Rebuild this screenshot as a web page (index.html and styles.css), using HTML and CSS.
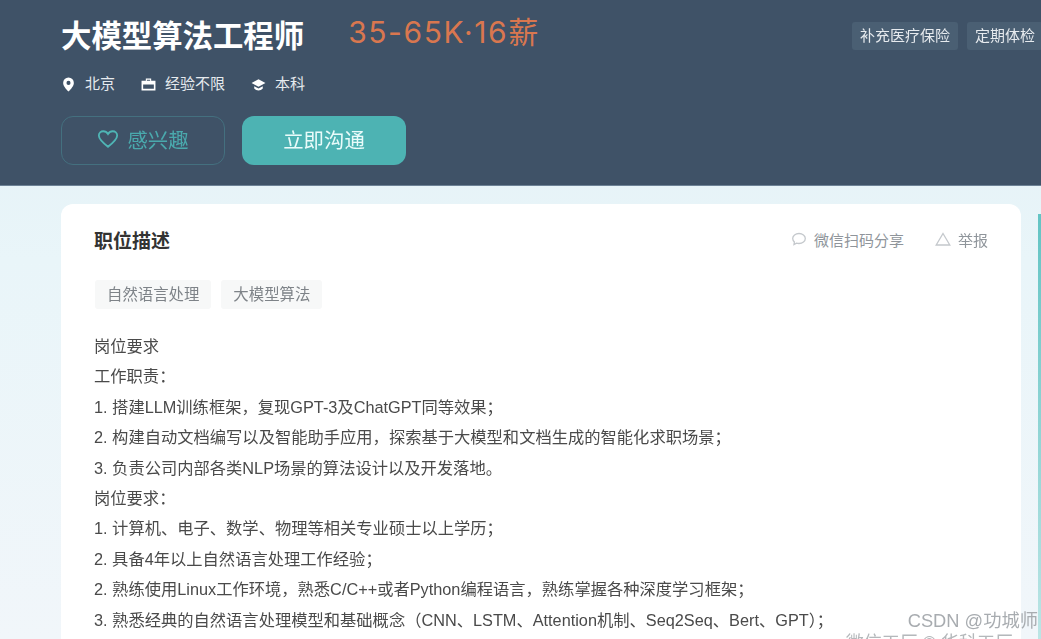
FILE: index.html
```html
<!DOCTYPE html>
<html lang="zh-CN">
<head>
  <meta charset="UTF-8">
  <title>大模型算法工程师</title>
  <link rel="stylesheet" href="styles.css">
</head>
<body>

  <!-- 顶部职位信息 -->
  <header class="job-header">
    <div class="job-main">
      <div class="title-row">
        <h1 class="job-title">大模型算法工程师</h1>
        <span class="job-salary">35-65K·16薪</span>
      </div>
      <ul class="job-meta">
        <li>
          <svg class="meta-icon" viewBox="0 0 14 14"><path fill="#fff" fill-rule="evenodd" d="M7 0.5a5 5 0 0 0-5 5c0 3.4 5 8 5 8s5-4.6 5-8a5 5 0 0 0-5-5zm0 3.1a1.9 1.9 0 1 1 0 3.8 1.9 1.9 0 0 1 0-3.8z"/></svg>
          北京
        </li>
        <li>
          <svg class="meta-icon" viewBox="0 0 14 14"><path fill="#fff" fill-rule="evenodd" d="M4.500 3.500V1.500h5v2h4v9H.5v-9zm1 0h3v-1h-3zM2 7v4h10V7z"/></svg>
          经验不限
        </li>
        <li>
          <svg class="meta-icon" viewBox="0 0 14 14"><path fill="#fff" d="M7 2 .5 5.500 7 9l6.500-3.500zM3 8.600v2.200C4 12 5.500 12.500 7 12.500s3-.5 4-1.700V8.600L7 10.700z"/></svg>
          本科
        </li>
      </ul>
      <div class="job-actions">
        <button class="btn btn-outline">
          <svg class="heart-icon" viewBox="0 0 24 24"><path fill="none" stroke="#4fb5b5" stroke-width="2" d="M12 20.500C5 15 2 11.800 2 8.200 2 5.300 4.300 3.500 6.800 3.500c2.100 0 4 1.100 5.200 3.100 1.200-2 3.100-3.100 5.200-3.100 2.500 0 4.800 1.800 4.800 4.700 0 3.600-3 6.800-10 12.300z"/></svg>
          感兴趣
        </button>
        <button class="btn btn-solid">立即沟通</button>
      </div>
    </div>
    <div class="job-benefits">
      <span>补充医疗保险</span>
      <span>定期体检</span>
    </div>
  </header>

  <div class="page-body">
    <section class="card">
      <div class="card-head">
        <h2>职位描述</h2>
        <div class="card-tools">
          <span class="tool">
            <svg class="tool-icon" viewBox="0 0 16 16"><path fill="none" stroke="#c4c8cc" stroke-width="1.300" d="M8 2.500c3.500 0 6.300 2.200 6.300 5s-2.800 5-6.300 5c-.9 0-1.700-.1-2.500-.4L3 13.500l.4-2.600C2.300 10 1.700 8.800 1.700 7.500c0-2.800 2.800-5 6.300-5z"/></svg>
            微信扫码分享
          </span>
          <span class="tool">
            <svg class="tool-icon" viewBox="0 0 16 16"><path fill="none" stroke="#c4c8cc" stroke-width="1.300" d="M8 2.500 14.800 14H1.200z"/></svg>
            举报
          </span>
        </div>
      </div>
      <div class="skill-tags">
        <span>自然语言处理</span>
        <span>大模型算法</span>
      </div>
      <div class="job-desc">
        <p>岗位要求</p>
        <p>工作职责：</p>
        <p>1. 搭建LLM训练框架，复现GPT-3及ChatGPT同等效果；</p>
        <p>2. 构建自动文档编写以及智能助手应用，探索基于大模型和文档生成的智能化求职场景；</p>
        <p>3. 负责公司内部各类NLP场景的算法设计以及开发落地。</p>
        <p>岗位要求：</p>
        <p>1. 计算机、电子、数学、物理等相关专业硕士以上学历；</p>
        <p>2. 具备4年以上自然语言处理工作经验；</p>
        <p>2. 熟练使用Linux工作环境，熟悉C/C++或者Python编程语言，熟练掌握各种深度学习框架；</p>
        <p>3. 熟悉经典的自然语言处理模型和基础概念（CNN、LSTM、Attention机制、Seq2Seq、Bert、GPT）；</p>
      </div>
    </section>
    <aside class="side-edge"></aside>
  </div>

  <div class="watermark">CSDN @功城师</div>
  <div class="watermark-low">微信工厂 © 华科工厂</div>

</body>
</html>
```

FILE: styles.css
```css
html, body {
  height: 100%;
}

body {
  margin: 0;
  overflow: hidden;
  font-family: "Liberation Sans", "Noto Sans CJK SC", sans-serif;
  background: linear-gradient(180deg, #e2f0f5 0, #e9f5f9 260px, #f1f6fa 100%);
  color: #333;
}

.job-header {
  height: 186px;
  box-sizing: border-box;
  padding: 15px 0 0 61px;
  display: flex;
  justify-content: space-between;
  background-color: #3f5267;
  border-bottom: 1px solid #6d8296;
  filter: blur(0.5px);
}

.title-row {
  display: flex;
  align-items: center;
  gap: 44px;
  height: 42px;
}

.job-title {
  margin: 0;
  font-size: 30.4px;
  line-height: 42px;
  font-weight: bold;
  color: #fff;
}

.job-salary {
  font-family: "Inter", "Noto Sans CJK SC", sans-serif;
  font-size: 30px;
  line-height: 38px;
  letter-spacing: 1.6px;
  margin-top: -8px;
  color: #d9774f;
}

.job-meta {
  list-style: none;
  margin: 17px 0 0;
  padding: 0;
  display: flex;
  gap: 26px;
  font-size: 15px;
  line-height: 20px;
  color: #e6eaee;
}

.job-meta li {
  display: flex;
  align-items: center;
  gap: 9px;
}

.meta-icon {
  width: 15px;
  height: 15px;
}

.job-actions {
  display: flex;
  gap: 17px;
  margin-top: 22px;
}

.btn {
  width: 164px;
  height: 49px;
  box-sizing: border-box;
  padding: 0 0 4px;
  border-radius: 12px;
  font-family: inherit;
  font-size: 20.4px;
  display: flex;
  align-items: center;
  justify-content: center;
}

.btn-outline {
  gap: 8px;
  background: transparent;
  border: 1px solid #44707f;
  color: #4aa9ad;
}

.heart-icon {
  width: 22px;
  height: 22px;
}

.btn-solid {
  border: none;
  background-color: #4db3b3;
  color: #e9fbfa;
}

.job-benefits {
  display: flex;
  flex-shrink: 0;
  gap: 9px;
  margin: 7px -8px 0 0;
  width: 197px;
  height: 28px;
  white-space: nowrap;
}

.job-benefits span {
  padding: 0 8px;
  line-height: 28px;
  font-size: 15px;
  border-radius: 3px;
  background-color: #4a5f73;
  color: #e6eaee;
}

.page-body {
  display: flex;
  padding: 18px 0 0 61px;
  filter: blur(0.5px);
}

.card {
  flex: 0 0 960px;
  box-sizing: border-box;
  height: 500px;
  padding: 21px 33px 0;
  background-color: #fff;
  border-radius: 12px;
}

.side-edge {
  flex: 0 0 3px;
  height: 440px;
  margin: 10px 0 0 17px;
  background: linear-gradient(180deg, #63c4c4 0, #bfe6e6 100%);
}

.card-head {
  display: flex;
  justify-content: space-between;
  align-items: center;
  height: 28px;
}

.card-head h2 {
  margin: 0;
  font-size: 19px;
  font-weight: bold;
  color: #333;
}

.card-tools {
  display: flex;
  gap: 31px;
  font-size: 15px;
  color: #8f959b;
}

.tool {
  display: flex;
  align-items: center;
  gap: 7px;
}

.tool-icon {
  width: 16px;
  height: 16px;
}

.skill-tags {
  display: flex;
  gap: 10px;
  margin: 27px 0 0 1px;
}

.skill-tags span {
  padding: 0 12px;
  line-height: 29px;
  font-size: 15.4px;
  border-radius: 3px;
  background-color: #f7f8f8;
  color: #7e8388;
}

.job-desc {
  margin-top: 22px;
  font-size: 16.3px;
  line-height: 30.4px;
  color: #4a4a4a;
}

.job-desc p {
  margin: 0;
}

.watermark {
  position: absolute;
  right: 3px;
  bottom: 6px;
  font-size: 18.3px;
  line-height: 24px;
  color: #a8acb0;
}

.watermark-low {
  position: absolute;
  right: 28px;
  top: 631px;
  font-size: 18px;
  line-height: 24px;
  color: #b4b8bb;
}
```
